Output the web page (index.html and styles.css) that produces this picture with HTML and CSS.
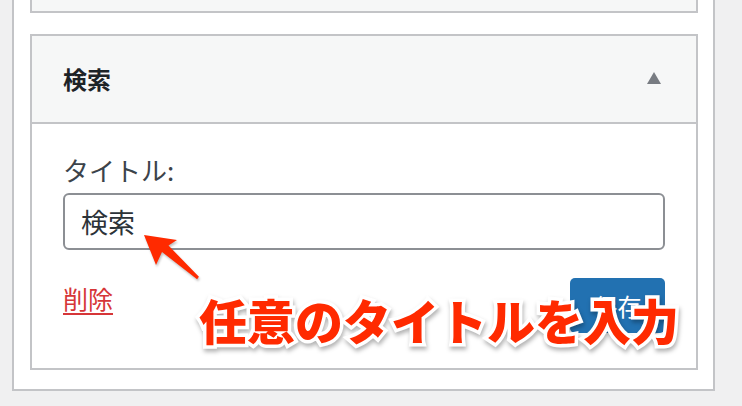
FILE: index.html
```html
<!DOCTYPE html>
<html lang="ja">
<head>
<meta charset="utf-8">
<link rel="stylesheet" href="styles.css">
</head>
<body>
<div class="outer">
  <div class="prev-card"></div>
  <div class="card">
    <div class="card-head">
      <h3 class="card-title">検索</h3>
      <span class="toggle"></span>
    </div>
    <div class="card-body">
      <label class="field-label">タイトル:</label>
      <div class="input">検索</div>
      <div class="actions">
        <a class="delete" href="#">削除</a>
        <button class="save">保存</button>
      </div>
    </div>
  </div>
</div>
<svg class="arrow" width="742" height="406" viewBox="0 0 742 406">
  <polygon points="144,235 177,240 168.5,245.5 198.9,276.8 197.1,279.2 162,252 156,265" fill="#ff2a00"/>
</svg>
<div class="note">任意のタイトルを入力</div>
</body>
</html>
```

FILE: styles.css
```css
html, body {
  margin: 0;
  padding: 0;
}
body {
  background: #f0f0f1;
  width: 742px;
  height: 406px;
  overflow: hidden;
  position: relative;
  font-family: "Noto Sans CJK JP", "Noto Sans", sans-serif;
}
.outer {
  margin-left: 12px;
  width: 668px;
  background: #fff;
  border: 2px solid #c3c4c7;
  border-top: none;
  padding: 0 15px 19px 16px;
}
.prev-card {
  height: 11px;
  background: #f6f7f7;
  border: 2px solid #c3c4c7;
  border-top: none;
}
.card {
  margin-top: 21px;
  border: 2px solid #c3c4c7;
  background: #fff;
}
.card-head {
  height: 86px;
  background: #f6f7f7;
  border-bottom: 2px solid #c3c4c7;
  display: flex;
  align-items: center;
  justify-content: space-between;
  padding: 0 35px 0 31px;
}
.card-title {
  margin: 0;
  font-size: 24px;
  font-weight: 700;
  color: #1d2327;
  line-height: 1;
}
.toggle {
  width: 0;
  height: 0;
  border-left: 7.5px solid transparent;
  border-right: 7.5px solid transparent;
  border-bottom: 12px solid #787c82;
  margin-top: -2px;
}
.card-body {
  padding: 28px 31px 35px 31px;
}
.field-label {
  display: block;
  font-size: 26px;
  line-height: 36px;
  color: #3c434a;
}
.input {
  margin-top: 5px;
  height: 53px;
  border: 2px solid #8c8f94;
  border-radius: 6px;
  padding: 0 16px;
  font-size: 27px;
  line-height: 53px;
  color: #2c3338;
}
.actions {
  margin-top: 28px;
  display: flex;
  justify-content: space-between;
  align-items: flex-start;
}
.delete {
  margin-top: 5px;
  font-size: 25px;
  line-height: 30px;
  color: #d63638;
  text-decoration: underline;
  text-underline-offset: 4px;
}
.save {
  width: 95px;
  height: 55px;
  background: #2271b1;
  border: none;
  border-radius: 5px;
  color: #fff;
  font-family: "Noto Sans CJK JP", sans-serif;
  font-size: 24px;
  padding: 0;
}
.arrow {
  position: absolute;
  left: 0;
  top: 0;
  filter: drop-shadow(1px 2px 1px rgba(0,0,0,0.25));
}
.note {
  position: absolute;
  left: 199px;
  top: 286px;
  font-size: 48px;
  line-height: 66px;
  font-weight: 900;
  color: #ff2a00;
  white-space: nowrap;
  -webkit-text-stroke: 7px #fff;
  paint-order: stroke fill;
  filter: drop-shadow(1px 3px 2px rgba(0,0,0,0.3));
}
```
